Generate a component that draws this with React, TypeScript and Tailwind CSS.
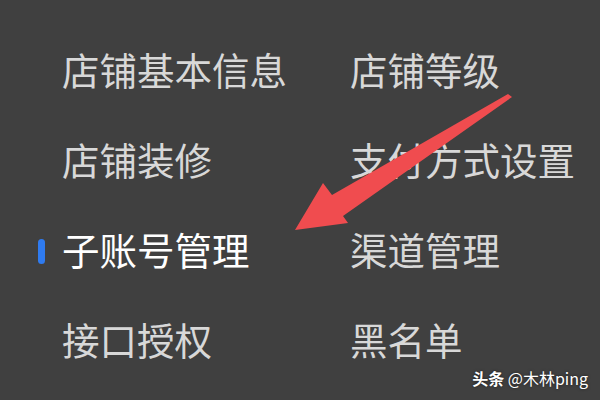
import React from 'react';

interface MenuItem {
    label: string;
    active?: boolean;
}

const rows: MenuItem[][] = [
    [{ label: '店铺基本信息' }, { label: '店铺等级' }],
    [{ label: '店铺装修' }, { label: '支付方式设置' }],
    [{ label: '子账号管理', active: true }, { label: '渠道管理' }],
    [{ label: '接口授权' }, { label: '黑名单' }],
];

const MenuCell: React.FC<MenuItem> = ({ label, active }) => (
    <div className="relative flex h-[90px] items-center">
        {active && <span className="absolute left-[-24px] top-[35px] h-[25px] w-[7px] rounded-full bg-[#2f7bf0]" />}
        <span className={active ? 'text-white' : 'text-[#d8d8d8]'}>{label}</span>
    </div>
);

const Arrow: React.FC = () => (
    <svg className="pointer-events-none absolute left-0 top-0" width="600" height="400" viewBox="0 0 600 400">
        <polygon
            points="295,230 323,183 332,195 508,94 512,97 343,216 348,223"
            fill="#f04c4f"
            strokeLinejoin="round"
        />
    </svg>
);

const App: React.FC = () => {
    return (
        <div
            className="relative h-[400px] w-[600px] overflow-hidden bg-[#404040]"
            style={{ fontFamily: '"Noto Sans CJK SC", "Noto Sans", sans-serif' }}
        >
            <div className="grid grid-cols-[288px_auto] pl-[62px] pt-[24px] text-[37.5px] leading-none">
                {rows.map((row, i) => (
                    <React.Fragment key={i}>
                        {row.map((item) => (
                            <MenuCell key={item.label} {...item} />
                        ))}
                    </React.Fragment>
                ))}
            </div>
            <Arrow />
            <div className="absolute bottom-[10px] right-[12px] text-[16px] text-white [text-shadow:0_0_3px_rgba(0,0,0,0.6)]">
                <span className="font-bold">头条</span> @木林ping
            </div>
        </div>
    );
};

export default App;
